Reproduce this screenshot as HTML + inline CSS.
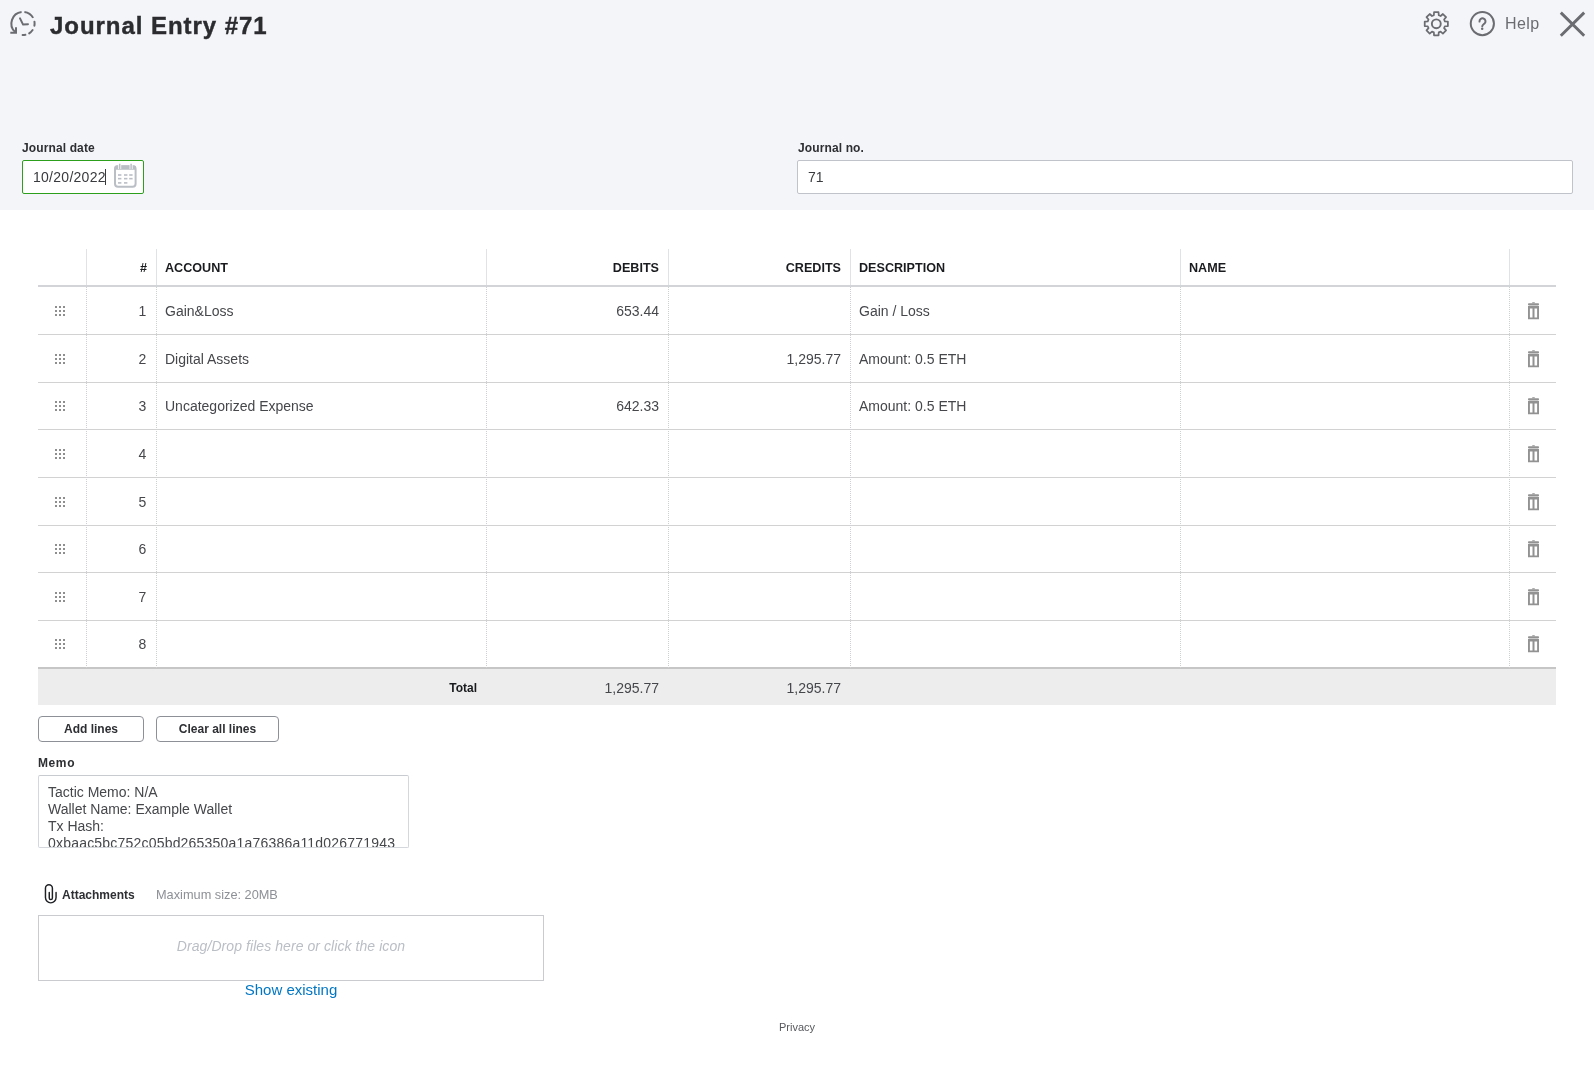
<!DOCTYPE html>
<html><head><meta charset="utf-8">
<style>
*{box-sizing:border-box;margin:0;padding:0}
html,body{width:1594px;height:1070px;overflow:hidden;background:#fff;font-family:"Liberation Sans",sans-serif;color:#393a3d}
.a{position:absolute;white-space:nowrap}
#hdr{position:absolute;left:0;top:0;width:1594px;height:210px;background:#f4f5f8}
.title{left:50px;top:8px;font-size:24px;line-height:36px;font-weight:bold;letter-spacing:0.95px;color:#2b2c2f;-webkit-text-stroke:0.4px #2b2c2f}
.lbl{font-size:12px;font-weight:bold;line-height:14px;letter-spacing:0.12px;color:#2e2f33}
.inp{position:absolute;background:#fff;border:1px solid #c0c3c9;border-radius:2px}
.txt14{font-size:14px;line-height:16px}
/* table */
.hline{position:absolute;left:38px;width:1518px;height:2px;background:#d2d4d8}
.rline{position:absolute;left:38px;width:1518px;height:1px;background:#d2d2d2}
.vsolid{position:absolute;width:1px;top:249px;height:36px;background:#e0e2e6}
.vdot{position:absolute;width:1px;top:287px;height:381px;background:repeating-linear-gradient(to bottom,#cfd0d2 0,#cfd0d2 1px,transparent 1px,transparent 2px)}
.th{position:absolute;top:259.8px;font-size:12.6px;font-weight:bold;line-height:16px;color:#1a1b1e}
.cell{position:absolute;font-size:14px;line-height:16px;color:#46474b;white-space:nowrap}
.r{text-align:right}
.btn{position:absolute;top:716px;height:26px;border:1px solid #8d9096;border-radius:4px;background:#fff;font-size:12px;font-weight:bold;line-height:25px;text-align:center;color:#2e2f33}
.a,.cell,.th,.btn,.lbl{will-change:transform}
</style></head><body>
<div id="hdr"></div>
<!-- history icon -->
<svg class="a" style="left:0;top:0" width="40" height="40" viewBox="0 0 40 40">
  <g fill="none" stroke="#6b6c72" stroke-width="2">
    <path d="M14.94 31.84A11.6 11.6 0 0 1 21.59 11.99 M24.41 11.99A11.6 11.6 0 0 1 33.15 17.88"/>
    <path d="M34.46 21.69A11.6 11.6 0 0 1 34.39 25.71 M32.62 29.99A11.6 11.6 0 0 1 29.15 33.34 M25.41 34.85A11.6 11.6 0 0 1 22.60 35.09" stroke-linecap="round"/>
    <path d="M16 27.2V32.8H10.3" stroke-linejoin="miter"/>
    <path d="M20 18.4L23.1 24.6L28 24.2" stroke-linecap="round" stroke-linejoin="round"/>
  </g>
</svg>
<div class="a title">Journal Entry #71</div>

<!-- top right icons -->
<svg class="a" style="left:1422px;top:10px" width="28" height="28" viewBox="0 0 28 28">
  <g fill="none" stroke="#6b6c72" stroke-width="1.75" stroke-linejoin="round" transform="translate(0.3,-0.2)">
    <path d="M11.55 5.44 L11.75 2.42 L16.25 2.42 L16.45 5.44 L18.31 6.22 L20.60 4.22 L23.78 7.40 L21.78 9.69 L22.56 11.55 L25.58 11.75 L25.58 16.25 L22.56 16.45 L21.78 18.31 L23.78 20.60 L20.60 23.78 L18.31 21.78 L16.45 22.56 L16.25 25.58 L11.75 25.58 L11.55 22.56 L9.69 21.78 L7.40 23.78 L4.22 20.60 L6.22 18.31 L5.44 16.45 L2.42 16.25 L2.42 11.75 L5.44 11.55 L6.22 9.69 L4.22 7.40 L7.40 4.22 L9.69 6.22Z"/>
    <circle cx="14" cy="14" r="4.45" stroke-width="1.9"/>
  </g>
</svg>
<svg class="a" style="left:1468px;top:10px" width="28" height="28" viewBox="0 0 28 28">
  <circle cx="14.35" cy="13.6" r="11.6" fill="none" stroke="#6b6c72" stroke-width="2"/>
  <path d="M11.51 11.56A3 3 0 1 1 16.80 13.23C15.2 14.5 14.3 15 14.25 16.2" fill="none" stroke="#6b6c72" stroke-width="2" stroke-linecap="round"/>
  <circle cx="14.2" cy="18.8" r="1.25" fill="#6b6c72"/>
</svg>
<div class="a" style="left:1505px;top:14px;font-size:16px;line-height:20px;letter-spacing:0.4px;color:#6b6c72">Help</div>
<svg class="a" style="left:1558px;top:10px" width="28" height="28" viewBox="0 0 28 28">
  <path d="M2.8 2.6L26.2 25.8M26.2 2.6L2.8 25.8" stroke="#6b6c72" stroke-width="2.9"/>
</svg>

<!-- journal date -->
<div class="a lbl" style="left:22px;top:140.7px">Journal date</div>
<div class="inp" style="left:22px;top:160px;width:122px;height:34px;border-color:#2ca01c"></div>
<div class="a txt14" style="left:32.5px;top:169.4px;letter-spacing:0.27px;color:#393a3d">10/20/2022</div>
<div class="a" style="left:105px;top:169px;width:1px;height:16px;background:#393a3d"></div>
<svg class="a" style="left:113px;top:163px" width="25" height="26" viewBox="0 0 25 26">
  <rect x="2" y="3.3" width="20.6" height="20.4" rx="3" fill="none" stroke="#babec5" stroke-width="2"/>
  <rect x="1.5" y="2.5" width="21.6" height="4.2" rx="1.5" fill="#babec5"/>
  <path d="M6.7 0.8v5.2M18.1 0.8v5.2" stroke="#fff" stroke-width="3"/>
  <path d="M6.7 0.8v5.2M18.1 0.8v5.2" stroke="#babec5" stroke-width="1.5"/>
  <g fill="#babec5"><rect x="5" y="11.2" width="3.4" height="1.6"/><rect x="11" y="11.2" width="3.4" height="1.6"/><rect x="16.2" y="11.2" width="3.4" height="1.6"/>
  <rect x="5" y="14.85" width="3.4" height="1.6"/><rect x="11" y="14.85" width="3.4" height="1.6"/><rect x="16.2" y="14.85" width="3.4" height="1.6"/>
  <rect x="5" y="19.1" width="3.4" height="1.6"/><rect x="11" y="19.1" width="3.4" height="1.6"/></g>
</svg>

<!-- journal no -->
<div class="a lbl" style="left:797.5px;top:140.7px">Journal no.</div>
<div class="inp" style="left:797px;top:160px;width:776px;height:34px"></div>
<div class="a txt14" style="left:808px;top:169.4px">71</div>

<!-- TABLE -->
<div class="hline" style="top:285px"></div>
<div class="rline" style="top:334px"></div>
<div class="rline" style="top:382px"></div>
<div class="rline" style="top:429px"></div>
<div class="rline" style="top:477px"></div>
<div class="rline" style="top:525px"></div>
<div class="rline" style="top:572px"></div>
<div class="rline" style="top:620px"></div>
<div class="hline" style="top:667px;background:#c6c6c6"></div>
<div class="vsolid" style="left:86px"></div>
<div class="vdot" style="left:86px"></div>
<div class="vsolid" style="left:156px"></div>
<div class="vdot" style="left:156px"></div>
<div class="vsolid" style="left:486px"></div>
<div class="vdot" style="left:486px"></div>
<div class="vsolid" style="left:668px"></div>
<div class="vdot" style="left:668px"></div>
<div class="vsolid" style="left:850px"></div>
<div class="vdot" style="left:850px"></div>
<div class="vsolid" style="left:1180px"></div>
<div class="vdot" style="left:1180px"></div>
<div class="vsolid" style="left:1509px"></div>
<div class="vdot" style="left:1509px"></div>
<div class="th r" style="left:100px;width:47px">#</div>
<div class="th" style="left:165px">ACCOUNT</div>
<div class="th r" style="left:500px;width:159px">DEBITS</div>
<div class="th r" style="left:680px;width:161px">CREDITS</div>
<div class="th" style="left:859px">DESCRIPTION</div>
<div class="th" style="left:1189px">NAME</div>
<svg class="a" style="left:55px;top:305.5px" width="10" height="10" viewBox="0 0 10 10"><g fill="#8e8e8e"><rect x="0" y="0" width="2" height="2"/><rect x="4" y="0" width="2" height="2"/><rect x="8" y="0" width="2" height="2"/><rect x="0" y="4" width="2" height="2"/><rect x="4" y="4" width="2" height="2"/><rect x="8" y="4" width="2" height="2"/><rect x="0" y="8" width="2" height="2"/><rect x="4" y="8" width="2" height="2"/><rect x="8" y="8" width="2" height="2"/></g></svg>
<div class="cell r" style="left:100px;width:46.3px;top:302.75px">1</div>
<div class="cell" style="left:165px;top:302.75px">Gain&amp;Loss</div>
<div class="cell r" style="left:500px;width:159px;top:302.75px">653.44</div>
<div class="cell" style="left:859px;top:302.75px">Gain / Loss</div>
<svg class="a" style="left:1527px;top:301.5px" width="13" height="18" viewBox="0 0 13 18"><g fill="#929292"><path d="M5.5 0.3h2l0.7 1h-3.4z"/><rect x="1" y="1.2" width="11" height="2.2" rx="0.8"/><path d="M1 3.9h11v13.3h-11z M2.9 6.4v9.1h2.6v-9.1z M7.5 6.4v9.1h2.6v-9.1z" fill-rule="evenodd"/></g></svg>
<svg class="a" style="left:55px;top:353.5px" width="10" height="10" viewBox="0 0 10 10"><g fill="#8e8e8e"><rect x="0" y="0" width="2" height="2"/><rect x="4" y="0" width="2" height="2"/><rect x="8" y="0" width="2" height="2"/><rect x="0" y="4" width="2" height="2"/><rect x="4" y="4" width="2" height="2"/><rect x="8" y="4" width="2" height="2"/><rect x="0" y="8" width="2" height="2"/><rect x="4" y="8" width="2" height="2"/><rect x="8" y="8" width="2" height="2"/></g></svg>
<div class="cell r" style="left:100px;width:46.3px;top:350.75px">2</div>
<div class="cell" style="left:165px;top:350.75px">Digital Assets</div>
<div class="cell r" style="left:680px;width:161px;top:350.75px">1,295.77</div>
<div class="cell" style="left:859px;top:350.75px">Amount: 0.5 ETH</div>
<svg class="a" style="left:1527px;top:349.5px" width="13" height="18" viewBox="0 0 13 18"><g fill="#929292"><path d="M5.5 0.3h2l0.7 1h-3.4z"/><rect x="1" y="1.2" width="11" height="2.2" rx="0.8"/><path d="M1 3.9h11v13.3h-11z M2.9 6.4v9.1h2.6v-9.1z M7.5 6.4v9.1h2.6v-9.1z" fill-rule="evenodd"/></g></svg>
<svg class="a" style="left:55px;top:401.0px" width="10" height="10" viewBox="0 0 10 10"><g fill="#8e8e8e"><rect x="0" y="0" width="2" height="2"/><rect x="4" y="0" width="2" height="2"/><rect x="8" y="0" width="2" height="2"/><rect x="0" y="4" width="2" height="2"/><rect x="4" y="4" width="2" height="2"/><rect x="8" y="4" width="2" height="2"/><rect x="0" y="8" width="2" height="2"/><rect x="4" y="8" width="2" height="2"/><rect x="8" y="8" width="2" height="2"/></g></svg>
<div class="cell r" style="left:100px;width:46.3px;top:398.25px">3</div>
<div class="cell" style="left:165px;top:398.25px">Uncategorized Expense</div>
<div class="cell r" style="left:500px;width:159px;top:398.25px">642.33</div>
<div class="cell" style="left:859px;top:398.25px">Amount: 0.5 ETH</div>
<svg class="a" style="left:1527px;top:397.0px" width="13" height="18" viewBox="0 0 13 18"><g fill="#929292"><path d="M5.5 0.3h2l0.7 1h-3.4z"/><rect x="1" y="1.2" width="11" height="2.2" rx="0.8"/><path d="M1 3.9h11v13.3h-11z M2.9 6.4v9.1h2.6v-9.1z M7.5 6.4v9.1h2.6v-9.1z" fill-rule="evenodd"/></g></svg>
<svg class="a" style="left:55px;top:448.5px" width="10" height="10" viewBox="0 0 10 10"><g fill="#8e8e8e"><rect x="0" y="0" width="2" height="2"/><rect x="4" y="0" width="2" height="2"/><rect x="8" y="0" width="2" height="2"/><rect x="0" y="4" width="2" height="2"/><rect x="4" y="4" width="2" height="2"/><rect x="8" y="4" width="2" height="2"/><rect x="0" y="8" width="2" height="2"/><rect x="4" y="8" width="2" height="2"/><rect x="8" y="8" width="2" height="2"/></g></svg>
<div class="cell r" style="left:100px;width:46.3px;top:445.75px">4</div>
<svg class="a" style="left:1527px;top:444.5px" width="13" height="18" viewBox="0 0 13 18"><g fill="#929292"><path d="M5.5 0.3h2l0.7 1h-3.4z"/><rect x="1" y="1.2" width="11" height="2.2" rx="0.8"/><path d="M1 3.9h11v13.3h-11z M2.9 6.4v9.1h2.6v-9.1z M7.5 6.4v9.1h2.6v-9.1z" fill-rule="evenodd"/></g></svg>
<svg class="a" style="left:55px;top:496.5px" width="10" height="10" viewBox="0 0 10 10"><g fill="#8e8e8e"><rect x="0" y="0" width="2" height="2"/><rect x="4" y="0" width="2" height="2"/><rect x="8" y="0" width="2" height="2"/><rect x="0" y="4" width="2" height="2"/><rect x="4" y="4" width="2" height="2"/><rect x="8" y="4" width="2" height="2"/><rect x="0" y="8" width="2" height="2"/><rect x="4" y="8" width="2" height="2"/><rect x="8" y="8" width="2" height="2"/></g></svg>
<div class="cell r" style="left:100px;width:46.3px;top:493.75px">5</div>
<svg class="a" style="left:1527px;top:492.5px" width="13" height="18" viewBox="0 0 13 18"><g fill="#929292"><path d="M5.5 0.3h2l0.7 1h-3.4z"/><rect x="1" y="1.2" width="11" height="2.2" rx="0.8"/><path d="M1 3.9h11v13.3h-11z M2.9 6.4v9.1h2.6v-9.1z M7.5 6.4v9.1h2.6v-9.1z" fill-rule="evenodd"/></g></svg>
<svg class="a" style="left:55px;top:544.0px" width="10" height="10" viewBox="0 0 10 10"><g fill="#8e8e8e"><rect x="0" y="0" width="2" height="2"/><rect x="4" y="0" width="2" height="2"/><rect x="8" y="0" width="2" height="2"/><rect x="0" y="4" width="2" height="2"/><rect x="4" y="4" width="2" height="2"/><rect x="8" y="4" width="2" height="2"/><rect x="0" y="8" width="2" height="2"/><rect x="4" y="8" width="2" height="2"/><rect x="8" y="8" width="2" height="2"/></g></svg>
<div class="cell r" style="left:100px;width:46.3px;top:541.25px">6</div>
<svg class="a" style="left:1527px;top:540.0px" width="13" height="18" viewBox="0 0 13 18"><g fill="#929292"><path d="M5.5 0.3h2l0.7 1h-3.4z"/><rect x="1" y="1.2" width="11" height="2.2" rx="0.8"/><path d="M1 3.9h11v13.3h-11z M2.9 6.4v9.1h2.6v-9.1z M7.5 6.4v9.1h2.6v-9.1z" fill-rule="evenodd"/></g></svg>
<svg class="a" style="left:55px;top:591.5px" width="10" height="10" viewBox="0 0 10 10"><g fill="#8e8e8e"><rect x="0" y="0" width="2" height="2"/><rect x="4" y="0" width="2" height="2"/><rect x="8" y="0" width="2" height="2"/><rect x="0" y="4" width="2" height="2"/><rect x="4" y="4" width="2" height="2"/><rect x="8" y="4" width="2" height="2"/><rect x="0" y="8" width="2" height="2"/><rect x="4" y="8" width="2" height="2"/><rect x="8" y="8" width="2" height="2"/></g></svg>
<div class="cell r" style="left:100px;width:46.3px;top:588.75px">7</div>
<svg class="a" style="left:1527px;top:587.5px" width="13" height="18" viewBox="0 0 13 18"><g fill="#929292"><path d="M5.5 0.3h2l0.7 1h-3.4z"/><rect x="1" y="1.2" width="11" height="2.2" rx="0.8"/><path d="M1 3.9h11v13.3h-11z M2.9 6.4v9.1h2.6v-9.1z M7.5 6.4v9.1h2.6v-9.1z" fill-rule="evenodd"/></g></svg>
<svg class="a" style="left:55px;top:639.0px" width="10" height="10" viewBox="0 0 10 10"><g fill="#8e8e8e"><rect x="0" y="0" width="2" height="2"/><rect x="4" y="0" width="2" height="2"/><rect x="8" y="0" width="2" height="2"/><rect x="0" y="4" width="2" height="2"/><rect x="4" y="4" width="2" height="2"/><rect x="8" y="4" width="2" height="2"/><rect x="0" y="8" width="2" height="2"/><rect x="4" y="8" width="2" height="2"/><rect x="8" y="8" width="2" height="2"/></g></svg>
<div class="cell r" style="left:100px;width:46.3px;top:636.25px">8</div>
<svg class="a" style="left:1527px;top:635.0px" width="13" height="18" viewBox="0 0 13 18"><g fill="#929292"><path d="M5.5 0.3h2l0.7 1h-3.4z"/><rect x="1" y="1.2" width="11" height="2.2" rx="0.8"/><path d="M1 3.9h11v13.3h-11z M2.9 6.4v9.1h2.6v-9.1z M7.5 6.4v9.1h2.6v-9.1z" fill-rule="evenodd"/></g></svg>
<div class="a" style="left:38px;top:669px;width:1518px;height:36px;background:#ededed"></div>
<div class="a" style="left:380px;width:97px;top:680px;font-size:12px;font-weight:bold;line-height:16px;text-align:right;color:#1a1b1e">Total</div>
<div class="cell r" style="left:500px;width:159px;top:680px">1,295.77</div>
<div class="cell r" style="left:680px;width:161px;top:680px">1,295.77</div>
<!-- /TABLE -->
<!-- BOTTOM -->
<div class="btn" style="left:38px;width:106px">Add lines</div>
<div class="btn" style="left:156px;width:123px">Clear all lines</div>
<div class="a lbl" style="left:38px;top:755.8px;letter-spacing:0.6px">Memo</div>
<div class="a" style="left:38px;top:775px;width:371px;height:73px;border:1px solid #d4d7dc;border-top-color:#c8cbd0;border-radius:2px;overflow:hidden;background:#fff">
  <div style="position:absolute;left:9px;top:8px;font-size:14px;line-height:17px;color:#393a3d;white-space:pre;color:#46474b">Tactic Memo: N/A
Wallet Name: Example Wallet
Tx Hash:
<span style="letter-spacing:0.2px">0xbaac5bc752c05bd265350a1a76386a11d026771943</span></div>
</div>
<svg class="a" style="left:38px;top:880px" width="24" height="26" viewBox="0 0 24 26">
  <path d="M18.06 12.4V17.6A5.3 5.3 0 0 1 7.46 17.6V8.3A3.47 3.47 0 0 1 14.4 8.3V17.9A1.57 1.57 0 0 1 11.26 17.9V12.4" fill="none" stroke="#1f2024" stroke-width="1.45" stroke-linecap="round"/>
</svg>
<div class="a lbl" style="left:62px;top:888px;letter-spacing:0px">Attachments</div>
<div class="a" style="left:156px;top:887px;font-size:12.75px;line-height:16px;color:#8d9096">Maximum size: 20MB</div>
<div class="a" style="left:38px;top:915px;width:506px;height:66px;border:1px solid #c9cbcf;background:#fff"></div>
<div class="a" style="left:38px;top:937.6px;width:506px;text-align:center;font-size:14px;letter-spacing:0.07px;line-height:16px;font-style:italic;color:#babec5">Drag/Drop files here or click the icon</div>
<div class="a" style="left:38px;top:980.8px;width:506px;text-align:center;font-size:15px;line-height:18px;color:#0077c5">Show existing</div>
<div class="a" style="left:0;top:1019.5px;width:1594px;text-align:center;font-size:11px;line-height:14px;color:#58595d">Privacy</div>
</body></html>
